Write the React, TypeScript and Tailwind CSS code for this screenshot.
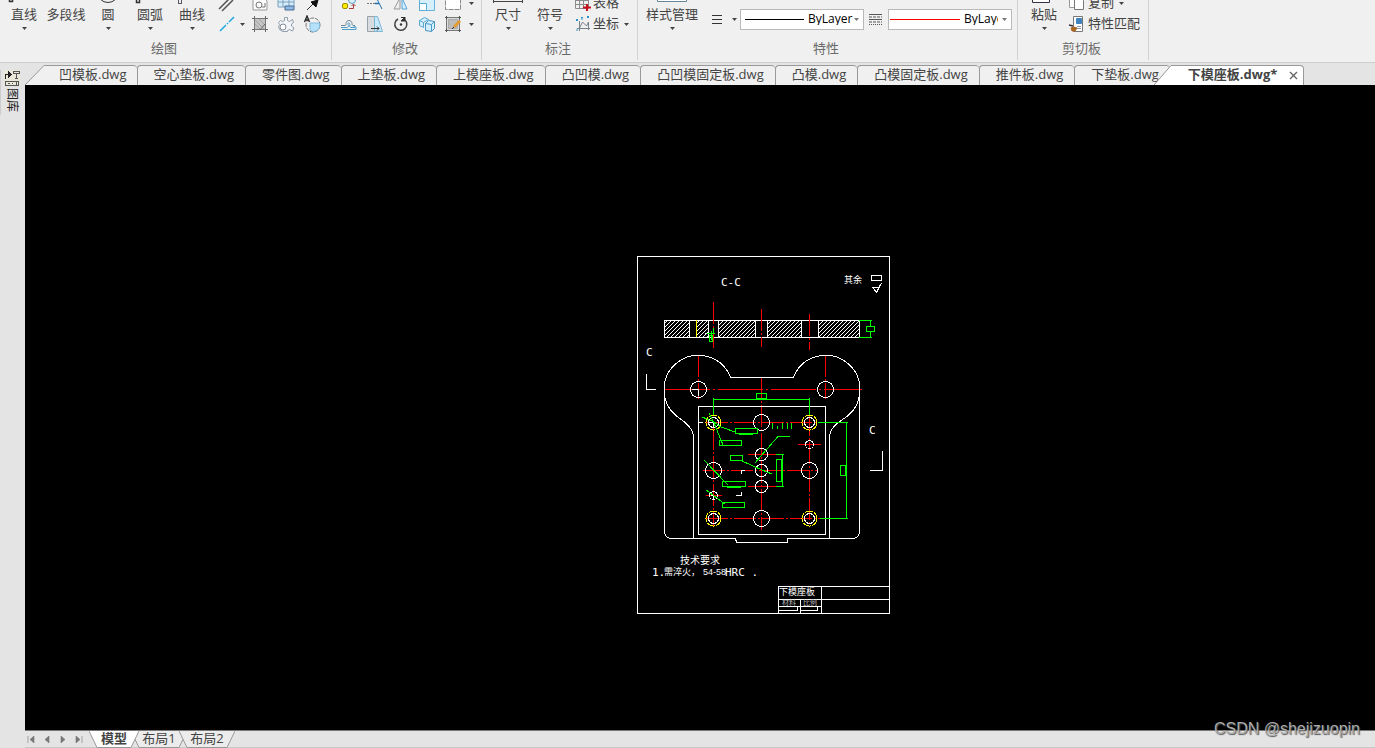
import React from "react";

type Kids = { children?: React.ReactNode };

function Caret({ className = "text-[#444]" }: { className?: string }) {
  return (
    <svg width="5" height="3" viewBox="0 0 5 3" className={className} aria-hidden="true">
      <path d="M0 0h5L2.5 3z" fill="currentColor" />
    </svg>
  );
}

function Icon({ children }: Kids) {
  return (
    <svg width="18" height="18" viewBox="0 0 18 18" fill="none" stroke="#5b6470" strokeWidth="1" aria-hidden="true">
      {children}
    </svg>
  );
}

function BigButton({ label, icon, caret = true, wide = false }: { label: string; icon: React.ReactNode; caret?: boolean; wide?: boolean }) {
  return (
    <button className={`flex shrink-0 flex-col items-center ${wide ? "w-[60px]" : "w-[42px]"}`}>
      <svg width="32" height="26" viewBox="0 0 32 26" fill="none" stroke="#333" strokeWidth="1" aria-hidden="true">
        {icon}
      </svg>
      <span className="flex h-[22px] items-center pb-[2px] whitespace-nowrap">{label}</span>
      <span className="flex h-[12px] items-start pt-[1px]">{caret && <Caret />}</span>
    </button>
  );
}

function IconButton({ label, children }: Kids & { label: string }) {
  return (
    <button aria-label={label} className="flex h-[20px] w-[26px] items-center justify-center">
      <Icon>{children}</Icon>
    </button>
  );
}

function DropButton({ label }: { label: string }) {
  return (
    <button aria-label={label} className="flex h-[20px] w-[11px] items-center justify-center">
      <Caret />
    </button>
  );
}

function Rows({ children }: Kids) {
  return <div className="flex flex-col gap-px pb-1">{children}</div>;
}

function Group({ title, className, inset, children }: Kids & { title: string; className: string; inset: string }) {
  return (
    <section className={`flex shrink-0 flex-col border-r border-[#d2d2d2] ${className}`}>
      <div className={`flex h-[38px] items-end overflow-hidden ${inset}`}>{children}</div>
      <h2 className="flex h-[20px] items-center justify-center pr-[3px] text-[#6a6a6a]">{title}</h2>
    </section>
  );
}

function Ribbon() {
  return (
    <header className="flex h-[63px] overflow-hidden border-b border-[#cdcdcd] bg-[#f0f0f0] pb-[2px]">
      <Group title="绘图" className="w-[332px]" inset="pl-[3px]">
        <BigButton label="直线" icon={<rect x="1.5" y="18.5" width="3" height="5" strokeWidth="1.5" />} />
        <BigButton label="多段线" caret={false} icon={null} />
        <BigButton label="圆" icon={<circle cx="16" cy="14" r="10.5" />} />
        <BigButton label="圆弧" icon={<rect x="2.5" y="19.5" width="3" height="5" strokeWidth="1.5" />} />
        <BigButton label="曲线" icon={<rect x="2.5" y="21.500" width="3" height="4" stroke="#556" />} />
        <Rows>
          <div className="flex">
            <IconButton label="双线"><path d="M5 17 16 6M2 15 13 4" stroke="#555" strokeWidth="1.5" /></IconButton>
            <span className="w-[8px]" />
            <IconButton label="修订云线"><path d="M2 3h10l4 4v9H2z" fill="#fafafa" stroke="#999" /><circle cx="8" cy="11" r="3" stroke="#777" /><path d="M11 13h3V9" stroke="#777" /></IconButton>
            <IconButton label="表"><path d="M1 3h16v10H1zM1 8h16M6 2v11M12 2v11" fill="#d5ecfb" stroke="#7da0bd" /><path d="M8 12h9v4H8z" fill="#8db9e6" stroke="#4a6b93" /></IconButton>
            <IconButton label="点"><path d="m4 16 7-7" stroke="#333" /><path d="m8 8 5 5 2-7z" fill="#111" stroke="#111" /></IconButton>
          </div>
          <div className="flex">
            <IconButton label="构造线"><path d="m3 16 6-6m1-1 1-1m1-1 5-5" stroke="#20a8e0" strokeWidth="1.5" /></IconButton>
            <span className="-mx-[2px] flex w-[12px]"><DropButton label="更多线" /></span>
            <IconButton label="填充">
              <path d="M3.500 3.500h11v11h-11z" fill="#c4c4c4" stroke="#777" />
              <path d="m4 5 9 9M4 9l5 5M8 4l6 6" stroke="#a5a5a5" />
              <path d="M3.500 1v3M1 3.500h3M14.500 1v3M14 3.500h3M3.500 14v3M1 14.500h3M14.500 14v3M14 14.500h3M14 9l-5 6" stroke="#666" />
            </IconButton>
            <IconButton label="零件">
              <path d="M7.500 5.500V2.500h3v3l2 1 3-2 1 3-2 1.500v2l2.500 2-1.500 3-3-1.500-2 1v1H5.500l-3-2-1-3 1-2-1-2 2-2 2 1z" fill="#f1f4f8" stroke="#929eaa" />
              <circle cx="6" cy="12" r="3" fill="#fff" stroke="#7e8896" />
            </IconButton>
            <IconButton label="区域填色">
              <circle cx="10" cy="10" r="7" stroke="#777" strokeDasharray="4 1" />
              <path d="M7 8h9.500v4c-1 3-3 4.500-6 4.500-2 0-3.500-1-3.500-2z" fill="#b5e2fa" stroke="#84bddd" />
              <path d="m1.500 7 2.500-6 2.500 6M2.500 5h3" stroke="#222" strokeWidth="1.3" />
            </IconButton>
          </div>
        </Rows>
      </Group>

      <Group title="修改" className="w-[150px]" inset="pl-[4px]">
        <Rows>
          <div className="flex">
            <IconButton label="复制对象"><circle cx="12" cy="6" r="3.500" fill="#d9effa" stroke="#5a9cc5" /><rect x="2.500" y="9.500" width="5" height="5" rx="1.500" fill="#ffeb00" stroke="#998d00" /><path d="M9 14.500h4.500V11m-2 1 2-2 2 2" stroke="#a33a3a" /></IconButton>
            <IconButton label="修剪"><path d="M1 9.500h8" stroke="#777" strokeDasharray="2 1" /><path d="M9 9.500h4" stroke="#1d6faf" strokeWidth="1.500" /><path d="m11 5 5 10" stroke="#1d6faf" /></IconButton>
            <IconButton label="镜像"><path d="M8 4v11H2z" stroke="#999" fill="#eee" /><path d="M10 4v11h5z" stroke="#54a6d5" fill="#d4effd" /></IconButton>
            <IconButton label="缩放"><path d="M1.500 1.500h15v15h-15z" fill="#d6effc" stroke="#66b3da" /><path d="M1.500 9.500h7v7h-7z" fill="#fff" stroke="#57abd7" /></IconButton>
            <IconButton label="矩形"><path d="M1.500 1.500h15v14h-15z" fill="#fff" stroke="#888" strokeDasharray="5 1" /></IconButton>
            <DropButton label="更多矩形工具" />
          </div>
          <div className="flex">
            <IconButton label="偏移">
              <path d="M1 10.500h4c1 0 1-1 1-2 0-4 6-4 6 0 0 1 0 2 2 2h1" stroke="#7b8790" />
              <path d="M2 14.500h14V12l-3-1.500M1 12.500h6c1 0 2-1 1-3-1-2 2-2 2 0-1 2 0 3 1 3h4" stroke="#4d9cca" />
            </IconButton>
            <IconButton label="拉伸"><path d="M1.500 1.500h7v15h-7z" fill="#d9dcde" stroke="#9aa2a8" /><path d="M8.500 1.500h3l5 15h-8z" fill="#c8e8fb" stroke="#7eb5d3" /><path d="M5 13.500h8m-2-2 2 2-2 2" stroke="#333" /></IconButton>
            <IconButton label="旋转">
              <path d="M6 4a6 6 0 1 0 7 1" stroke="#444" strokeWidth="1.500" /><path d="M9 2.500h3M13 2v4H9z" stroke="#333" fill="#333" /><circle cx="9" cy="9.500" r="1.200" fill="#333" stroke="none" />
            </IconButton>
            <IconButton label="阵列">
              <path d="m1.500 5.500 5-3 4 2-5 3zM1.500 5.500v5l4 2v-5" fill="#d4effd" stroke="#57a9d4" />
              <path d="m7.500 8.500 3-3 6 1v7l-3 3-6-1zM7.500 8.500l6 1v7M13.500 9.500l3-3" fill="#d4effd" stroke="#4a98c6" />
            </IconButton>
            <IconButton label="编辑填充">
              <path d="M2.500 2.500h13v13h-13z" fill="#dadada" stroke="#777" /><path d="M4.500 4.500h9v9h-9z" fill="#bdbdbd" stroke="#a8a8a8" />
              <path d="M1 2.500h3M2.500 1v3M1 15.500h3M2.500 14v3M14 15.500h3M15.500 14v3M14 2.500h3M15.500 1v3" stroke="#555" />
              <path d="m10 12 6-6" stroke="#e39b33" strokeWidth="3" /><path d="m8 14 2-2" stroke="#333" />
            </IconButton>
            <DropButton label="更多编辑工具" />
          </div>
        </Rows>
      </Group>

      <Group title="标注" className="w-[156px]" inset="pl-[5px]">
        <BigButton label="尺寸" icon={<path d="M1.500 20v5M30.500 20v5M1 23.500h30" stroke="#444" />} />
        <BigButton label="符号" icon={null} />
        <Rows>
          <button className="flex h-[20px] items-center pl-[3px]">
            <Icon><path d="M1.500 2.500h13v12h-13zM2 6.500h12M2 10.500h12M5.500 2v12M9.500 2v12" stroke="#8a8a8a" /><path d="M13 10v7m-4-3.500h8" stroke="#c6101c" strokeWidth="2" /></Icon>
            <span className="pb-[2px] pl-[1px]">表格</span>
          </button>
          <button className="flex h-[20px] items-center pl-[4px]">
            <Icon><path d="M4.500 6v10M2 13.500h13M4.500 13l3-6 4 4 2-4M13.500 7v8" stroke="#78828a" /><path d="m1 4 2 2m0-2L1 6m11-5 2 2m0-2-2 2M1 15h2M6 2l1 1 1-1M7 3v2" stroke="#2b91cc" /></Icon>
            <span className="pr-[5px] pb-[2px]">坐标</span>
            <Caret />
          </button>
        </Rows>
      </Group>

      <Group title="特性" className="w-[380px]" inset="pl-[4px]">
        <BigButton label="样式管理" wide icon={<path d="M1.500 2h29v21.500h-29z" fill="#fff" stroke="#66889d" />} />
        <div className="flex h-[38px] grow items-center pr-[5px]">
          <button aria-label="线宽" className="flex h-[20px] items-center gap-[10px] pl-[10px]">
            <svg width="10" height="9" viewBox="0 0 10 9" stroke="#333" aria-hidden="true"><path d="M0 .5h10M0 4.500h10M0 8.500h10" /></svg>
            <Caret />
          </button>
          <div className="relative ml-[3px] h-[21px] w-[124px]">
            <select aria-label="线宽样式" className="h-full w-full appearance-none border border-[#b9b9b9] bg-white pr-[8px] pl-[67px] text-[12px] text-black">
              <option>ByLayer</option>
            </select>
            <span className="pointer-events-none absolute top-[10px] left-[5px] h-px w-[59px] bg-black" />
            <span className="pointer-events-none absolute top-[9px] right-[5px] flex"><Caret className="text-[#777]" /></span>
          </div>
          <svg className="mx-[5px]" width="13" height="11" viewBox="0 0 13 11" stroke="#555" aria-hidden="true">
            <path d="M0 .5h13M0 5.500h13" /><path d="M0 3h13M0 8h13" strokeDasharray="3 1" /><path d="M0 10.500h13" strokeDasharray="1 1" />
          </svg>
          <div className="relative ml-auto h-[21px] w-[124px]">
            <select aria-label="线型样式" className="h-full w-full appearance-none border border-[#b9b9b9] bg-white pr-[13px] pl-[75px] text-[12px] text-black">
              <option>ByLayer</option>
            </select>
            <span className="pointer-events-none absolute top-[10px] left-[2px] h-px w-[70px] bg-[#f00]" />
            <span className="pointer-events-none absolute top-[9px] right-[5px] flex"><Caret className="text-[#777]" /></span>
          </div>
        </div>
      </Group>

      <Group title="剪切板" className="w-[131px]" inset="pl-[5px]">
        <BigButton label="粘贴" icon={<path d="M4.500 2h17v22.500h-17z" fill="#fff" stroke="#334" />} />
        <Rows>
          <button className="flex h-[20px] items-center pl-[3px]">
            <Icon><path d="M1.500 1.500h6v12h-6z" fill="#fff" stroke="#999" /><path d="M6.500 3.500h6l3 3v9h-9z" fill="#fff" stroke="#777" /></Icon>
            <span className="pr-[5px] pb-[2px] pl-[2px]">复制</span>
            <Caret />
          </button>
          <button className="flex h-[20px] items-center pl-[3px]">
            <Icon><path d="M5.500 1.500h9v15h-9z" fill="#fff" stroke="#777" /><path d="M8.500 3.500h5v5h-5z" fill="#3f83bf" stroke="#3f83bf" /><path d="M9 11.500h4M9 13.500h4" stroke="#89a" /><path d="m1 10 4 1" stroke="#333" strokeWidth="1.500" /><path d="m3 13 3-1 3 1-2 3H4z" fill="#ad661f" stroke="#ad661f" /></Icon>
            <span className="pb-[2px] pl-[2px]">特性匹配</span>
          </button>
        </Rows>
      </Group>
    </header>
  );
}

const files = ["空心垫板", "零件图", "上垫板", "上模座板", "凸凹模", "凸凹模固定板", "凸模", "凸模固定板", "推件板", "下垫板"];

function FileTabs() {
  return (
    <nav className="flex h-[22px] overflow-hidden pt-[2px] whitespace-nowrap text-[#444]">
      <button className="flex shrink-0">
        <svg width="20" height="20" viewBox="0 0 20 20" aria-hidden="true">
          <path d="M0 20 19 .5H20V20z" fill="#f0f0f0" /><path d="M0 20 19 .5H20" fill="none" stroke="#999" />
        </svg>
        <span className="flex h-[20px] items-center rounded-tr-[4px] border-t border-[#999] bg-[#f0f0f0] pr-[10px] pb-[2px] pl-[14px]">凹模板.dwg</span>
      </button>
      {files.map((name) => (
        <button key={name} className="flex h-[20px] shrink-0 items-center rounded-t-[4px] border-t border-l border-[#999] bg-[#f0f0f0] pr-[11px] pb-[2px] pl-[16px]">
          {name}.dwg
        </button>
      ))}
      <div className="relative -ml-[16px] flex shrink-0">
        <svg width="18" height="20" viewBox="0 0 18 20" aria-hidden="true">
          <path d="M0 20 17 .5H18V20z" fill="#fff" /><path d="M0 20 17 .5H18" fill="none" stroke="#999" />
        </svg>
        <div className="flex h-[20px] items-center gap-[12px] rounded-tr-[4px] border-t border-r border-[#999] bg-white pr-[5px] pl-[16px]">
          <button className="pb-[2px] font-bold">下模座板.dwg*</button>
          <button aria-label="关闭">
            <svg width="9" height="9" viewBox="0 0 9 9" stroke="#666" strokeWidth="1.400" aria-hidden="true"><path d="m1 1 7 7m0-7L1 8" /></svg>
          </button>
        </div>
      </div>
    </nav>
  );
}

const screws: [number, number][] = [[713.5, 422.5], [809.5, 422.5], [713.5, 518.5], [809.5, 518.5]];
const holes: [number, number, number][] = [
  [698.5, 389.5, 8], [825.5, 389.5, 8], [761.5, 422.5, 8], [713.5, 470.5, 8], [809.5, 470.5, 8], [761.5, 518.5, 8],
  [809.5, 444.5, 4], [713.5, 495.5, 4], [761.5, 454.5, 6], [761.5, 470.5, 6], [761.5, 486.5, 6],
];
const hatched: [number, number][] = [[664, 26], [696, 13], [718, 38], [767, 35], [818, 42]];

function Drawing() {
  return (
    <svg className="absolute top-[171px] left-[612px]" width="253" height="358" viewBox="637 256 253 358" fill="none" stroke="#fff" shapeRendering="crispEdges" role="img" aria-label="下模座板">
      <defs>
        <pattern id="hatch" width="4" height="4" patternUnits="userSpaceOnUse">
          <path d="M-1 1 1-1M0 4 4 0M3 5 5 3" stroke="#fff" strokeWidth="1" />
        </pattern>
      </defs>
      <rect x="637.5" y="256.5" width="252" height="357" />
      {hatched.map(([x, w]) => <rect key={x} x={x} y="320" width={w} height="18" fill="url(#hatch)" stroke="none" />)}
      <path d="M664.5 320.5H859.5V337.5H664.5zM689.5 320v17M708.5 320v17M718.5 320v17M755.5 320v17M767.5 320v17M801.5 320v17M818.5 320v17" />
      <path d="M696.5 320v17" stroke="#ff0" />

      <g stroke="#f00" strokeDasharray="22 2 2 2">
        <path d="M713.5 302v46M761.5 309v38M809.5 314v36" />
        <path d="M665 389.5H862" strokeDasharray="45 3 2 3" />
        <path d="M698.5 355v44M825.5 355v44M761.5 377v153M713.5 428v98M809.5 414v112" />
        <path d="M706 422.5H822M703 470.5H818M706 518.5H822" />
        <path d="M798 444.5h23M748 454.5h28M748 486.5h28M706 495.5h16" strokeDasharray="none" />
      </g>

      <path d="M693.5 538V437C693 428 686 423 678.5 417.5A34.3 34.3 0 1 1 730.500 377.5H793.5A34.3 34.3 0 1 1 845.500 417.500C837 423 830 428 829.5 437V538" />
      <path d="M664.5 389V532Q665 538 671 538.5H735.5L736.5 542.5H787.5V538.5H853Q859 538 859.5 532V389" />
      <rect x="698.5" y="406.5" width="127" height="128" />
      {holes.map(([x, y, r]) => <circle key={`${x}-${y}`} cx={x} cy={y} r={r} />)}
      {screws.map(([x, y]) => (
        <g key={`${x}-${y}`}>
          <circle cx={x} cy={y} r="7.5" stroke="#ff0" strokeDasharray="9 1" />
          <circle cx={x} cy={y} r="5" />
        </g>
      ))}
      <path d="M646.5 374V389.5H656M882.5 451V470.5H870M692 389.5h6.5v6M699 422.5h4M709 422.5h4.5v5M741.5 474V470.5H745M736 495.5h5.5V492M711 495.5h2.5v3M705 333.5h6" />

      <g stroke="#0f0">
        <path d="M859 320.5h13M859 337.5h13M870.5 321v5M870.5 332v5" />
        <rect x="866.5" y="326.5" width="8" height="5" />
        <path d="M707 333.5h8M713.5 328v5M711.5 331v9" />
        <rect x="709.5" y="335.5" width="3" height="6" />
        <path d="M713.5 398v17M809.5 398v17M713 399.5h97" />
        <rect x="756.5" y="393.5" width="10" height="5" />
        <path d="M818 422.5h30M820 518.5h28M846.5 422v96" />
        <rect x="840.5" y="465.5" width="5" height="10" />
        <rect x="735.5" y="428.5" width="22" height="5" />
        <rect x="719.5" y="440.5" width="22" height="5" />
        <rect x="730.5" y="455.5" width="12" height="5" />
        <rect x="776.5" y="459.5" width="5" height="22" />
        <rect x="722.5" y="481.5" width="23" height="5" />
        <rect x="722.5" y="502.5" width="22" height="5" />
        <path d="M739 434.5h14M727 487.5h14M776 454.5h8M776 486.5h8M782.5 454v33" />
        <path d="m702 417 12 5 7 5 14 5M709 413l5 10 9 22M704 460l24 25M706 490l19 14M742 461l20 9 10 4M755 463l12-14 11-12.5h12" />
        <path d="M772.5 423v6M777.5 426v3M782.5 423v6M787.5 423v6M791.5 423v6" />
      </g>

      <rect x="871.5" y="275.5" width="10" height="5" />
      <path d="M873 287.5h6L876.5 292.5zM878 288l4-5" />
      <path d="M778.5 613.5V586.5H889.5M821.5 587v26M778 599.5H889M800.5 600v13M778 606.5h43M778.5 606.5h19v4h-19zM800.5 606.5h17v4h-17z" />

      <g className="font-['Liberation_Sans','Noto_Sans_CJK_SC',sans-serif]" fill="#fff" stroke="none">
        <g fontSize="11" className="font-['DejaVu_Sans_Mono',monospace]">
          <text x="721" y="286">C-C</text>
          <text x="646" y="356">C</text>
          <text x="869" y="434">C</text>
          <text x="652" y="576">1.</text>
          <text x="725" y="576">HRC .</text>
        </g>
        <g fontSize="9">
          <text x="844" y="283">其余</text>
          <text x="664" y="575">需淬火，</text>
          <text x="703" y="575">54-58</text>
          <text x="779" y="595">下模座板</text>
        </g>
        <text x="680" y="564" fontSize="10">技术要求</text>
        <g fontSize="7" fill="#bbb">
          <text x="782" y="605">材料</text>
          <text x="803" y="605">比例</text>
        </g>
      </g>
    </svg>
  );
}

function SheetTab({ label, active = false }: { label: string; active?: boolean }) {
  return (
    <button className={`relative -ml-[8px] flex h-[17px] items-center justify-center pb-[3px] ${active ? "z-10 w-[50px] font-bold" : "w-[56px]"}`}>
      <svg className="absolute inset-0" width={active ? 50 : 56} height="17" fill={active ? "#fff" : "#ececec"} stroke="#999" aria-hidden="true">
        <path d={active ? "M0 0 8 16.5H42L50 0" : "M0 0 8 16.5H48L56 0"} />
      </svg>
      <span className="relative">{label}</span>
    </button>
  );
}

function SheetTabs() {
  const steps = [
    ["首个", "M1 0v7M7 0v7L3 3.5z"],
    ["上一个", "M6 0v7L2 3.5z"],
    ["下一个", "M2 0v7l4-3.500z"],
    ["末个", "M1 0v7l4-3.500zM7 0v7"],
  ];
  return (
    <footer className="flex h-[18px] items-start border-t border-b border-t-[#777] border-b-[#c8c8c8]">
      <div className="flex h-[17px] items-center gap-[8px] pr-[14px] pl-[2px]">
        {steps.map(([label, d]) => (
          <button key={label} aria-label={label}>
            <svg width="8" height="7" viewBox="0 0 8 7" fill="#777" stroke="#777" strokeWidth=".6" aria-hidden="true"><path d={d} /></svg>
          </button>
        ))}
      </div>
      <SheetTab label="模型" active />
      <SheetTab label="布局1" />
      <SheetTab label="布局2" />
    </footer>
  );
}

export default function App() {
  return (
    <div className="relative flex h-screen flex-col overflow-hidden bg-[#e4e4e4] font-['Open_Sans','Noto_Sans_CJK_SC',sans-serif] text-[13px] leading-none text-[#444]">
      <Ribbon />
      <div className="flex min-h-0 grow">
        <aside className="w-[25px] shrink-0 pt-[7px]">
          <button className="flex w-[22px] flex-col items-center gap-[2px] border-l border-[#ccc] pb-[3px]">
            <svg width="16" height="16" viewBox="0 0 16 16" fill="none" stroke="#222" shapeRendering="crispEdges" className="bg-[#e9e8d8]" aria-hidden="true">
              <path d="M1.5 9V4.500H5" strokeWidth="1" /><path d="M4 1l4 3.500L4 8z" fill="#222" stroke="none" />
              <path d="M9.500 1.500h6v2h-6zM12.500 4v5M11 8.500h3" stroke="#555" />
              <path d="M1.500 11.500h13v4h-13zM4 13.500h2M8 13.500h1M12 12v3" stroke="#555" />
            </svg>
            <span className="text-[12px] text-[#222] [text-orientation:sideways] [writing-mode:vertical-rl]">图库</span>
          </button>
        </aside>
        <div className="flex min-w-0 grow flex-col">
          <FileTabs />
          <main className="relative min-h-0 grow overflow-hidden bg-black">
            <Drawing />
          </main>
          <SheetTabs />
        </div>
      </div>
      <p className="absolute right-[15px] bottom-[9px] font-['Liberation_Sans',sans-serif] text-[16px] leading-[20px] text-[#aaa] [text-shadow:1px_1px_1px_#555]">CSDN @shejizuopin</p>
    </div>
  );
}
